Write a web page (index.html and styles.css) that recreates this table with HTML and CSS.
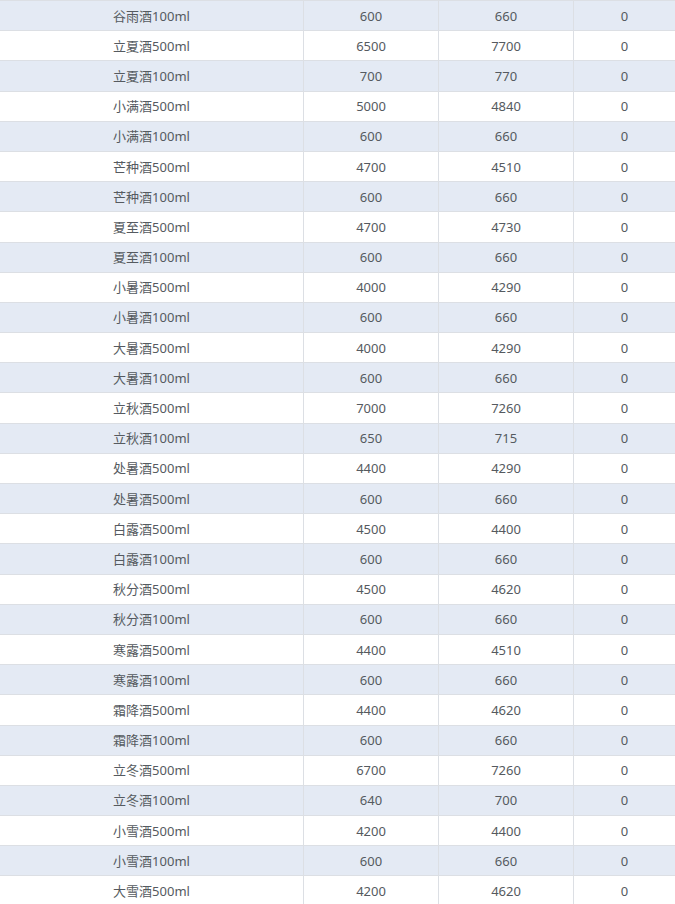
FILE: index.html
```html
<!DOCTYPE html>
<html lang="zh">
<head>
<meta charset="utf-8">
<link rel="stylesheet" href="styles.css">
</head>
<body>
<div class="table">
  <div class="row s"><div class="c c1">谷雨酒100ml</div><div class="c">600</div><div class="c">660</div><div class="c c4">0</div></div>
  <div class="row"><div class="c c1">立夏酒500ml</div><div class="c">6500</div><div class="c">7700</div><div class="c c4">0</div></div>
  <div class="row s"><div class="c c1">立夏酒100ml</div><div class="c">700</div><div class="c">770</div><div class="c c4">0</div></div>
  <div class="row"><div class="c c1">小满酒500ml</div><div class="c">5000</div><div class="c">4840</div><div class="c c4">0</div></div>
  <div class="row s"><div class="c c1">小满酒100ml</div><div class="c">600</div><div class="c">660</div><div class="c c4">0</div></div>
  <div class="row"><div class="c c1">芒种酒500ml</div><div class="c">4700</div><div class="c">4510</div><div class="c c4">0</div></div>
  <div class="row s"><div class="c c1">芒种酒100ml</div><div class="c">600</div><div class="c">660</div><div class="c c4">0</div></div>
  <div class="row"><div class="c c1">夏至酒500ml</div><div class="c">4700</div><div class="c">4730</div><div class="c c4">0</div></div>
  <div class="row s"><div class="c c1">夏至酒100ml</div><div class="c">600</div><div class="c">660</div><div class="c c4">0</div></div>
  <div class="row"><div class="c c1">小暑酒500ml</div><div class="c">4000</div><div class="c">4290</div><div class="c c4">0</div></div>
  <div class="row s"><div class="c c1">小暑酒100ml</div><div class="c">600</div><div class="c">660</div><div class="c c4">0</div></div>
  <div class="row"><div class="c c1">大暑酒500ml</div><div class="c">4000</div><div class="c">4290</div><div class="c c4">0</div></div>
  <div class="row s"><div class="c c1">大暑酒100ml</div><div class="c">600</div><div class="c">660</div><div class="c c4">0</div></div>
  <div class="row"><div class="c c1">立秋酒500ml</div><div class="c">7000</div><div class="c">7260</div><div class="c c4">0</div></div>
  <div class="row s"><div class="c c1">立秋酒100ml</div><div class="c">650</div><div class="c">715</div><div class="c c4">0</div></div>
  <div class="row"><div class="c c1">处暑酒500ml</div><div class="c">4400</div><div class="c">4290</div><div class="c c4">0</div></div>
  <div class="row s"><div class="c c1">处暑酒500ml</div><div class="c">600</div><div class="c">660</div><div class="c c4">0</div></div>
  <div class="row"><div class="c c1">白露酒500ml</div><div class="c">4500</div><div class="c">4400</div><div class="c c4">0</div></div>
  <div class="row s"><div class="c c1">白露酒100ml</div><div class="c">600</div><div class="c">660</div><div class="c c4">0</div></div>
  <div class="row"><div class="c c1">秋分酒500ml</div><div class="c">4500</div><div class="c">4620</div><div class="c c4">0</div></div>
  <div class="row s"><div class="c c1">秋分酒100ml</div><div class="c">600</div><div class="c">660</div><div class="c c4">0</div></div>
  <div class="row"><div class="c c1">寒露酒500ml</div><div class="c">4400</div><div class="c">4510</div><div class="c c4">0</div></div>
  <div class="row s"><div class="c c1">寒露酒100ml</div><div class="c">600</div><div class="c">660</div><div class="c c4">0</div></div>
  <div class="row"><div class="c c1">霜降酒500ml</div><div class="c">4400</div><div class="c">4620</div><div class="c c4">0</div></div>
  <div class="row s"><div class="c c1">霜降酒100ml</div><div class="c">600</div><div class="c">660</div><div class="c c4">0</div></div>
  <div class="row"><div class="c c1">立冬酒500ml</div><div class="c">6700</div><div class="c">7260</div><div class="c c4">0</div></div>
  <div class="row s"><div class="c c1">立冬酒100ml</div><div class="c">640</div><div class="c">700</div><div class="c c4">0</div></div>
  <div class="row"><div class="c c1">小雪酒500ml</div><div class="c">4200</div><div class="c">4400</div><div class="c c4">0</div></div>
  <div class="row s"><div class="c c1">小雪酒100ml</div><div class="c">600</div><div class="c">660</div><div class="c c4">0</div></div>
  <div class="row"><div class="c c1">大雪酒500ml</div><div class="c">4200</div><div class="c">4620</div><div class="c c4">0</div></div>
</div>
</body>
</html>
```
FILE: styles.css
```css
html, body {
  margin: 0;
  padding: 0;
  background: #ffffff;
}
body {
  font-family: "Noto Sans", "Noto Sans CJK SC", sans-serif;
  font-size: 13px;
  color: #555a60;
  overflow: hidden;
}
.table {
  width: 675px;
}
.row {
  display: grid;
  grid-template-columns: 303px 135px 135px 102px;
  height: 30.2px;
  box-sizing: border-box;
  border-top: 1px solid #dcdfe4;
  background: #ffffff;
}
.row.s {
  background: #e4eaf4;
}
.c {
  display: flex;
  align-items: center;
  justify-content: center;
  border-left: 1px solid #dcdfe4;
  line-height: 1;
  padding-top: 1px;
}
.c1 {
  border-left: none;
}
```
